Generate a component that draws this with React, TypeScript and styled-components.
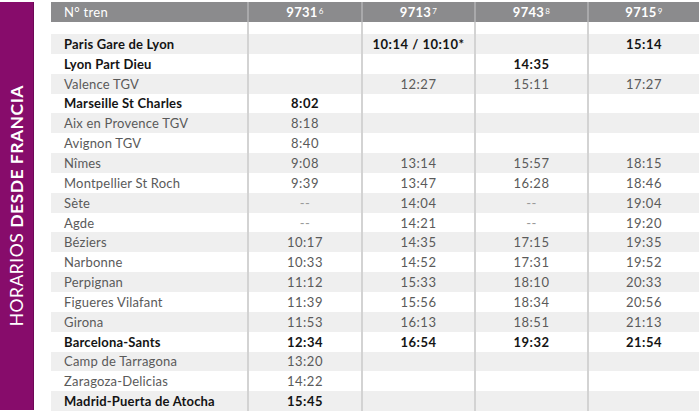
import React from 'react';
import styled, { createGlobalStyle } from 'styled-components';

const GlobalStyle = createGlobalStyle`
  html, body {
    margin: 0;
    padding: 0;
    background: #ffffff;
  }
  body {
    font-family: Lato, "Noto Sans", "Liberation Sans", sans-serif;
  }
`;

const Page = styled.div`
  display: flex;
  width: 700px;
  height: 415px;
  padding-top: 2px;
  box-sizing: border-box;
`;

const Banner = styled.div`
  width: 34px;
  height: 408px;
  background: #870c6b;
  border-right: 1px solid #6e0756;
  box-sizing: border-box;
  display: flex;
  align-items: center;
  justify-content: center;
  margin-right: 17px;
`;

const BannerText = styled.div`
  writing-mode: vertical-rl;
  transform: rotate(180deg);
  color: #ffffff;
  font-size: 17.5px;
  letter-spacing: 0.5px;
  white-space: nowrap;
  font-weight: 400;

  b {
    font-weight: 700;
  }
`;

const Table = styled.div`
  display: grid;
  grid-template-columns: 196px 114px 113px 113px 112px;
  align-content: start;
`;

const HeadCell = styled.div<{ $first?: boolean }>`
  height: 20px;
  background: #8b8b8d;
  color: #ffffff;
  font-size: 13px;
  font-weight: ${(p) => (p.$first ? 400 : 700)};
  letter-spacing: 0.3px;
  display: flex;
  align-items: center;
  justify-content: ${(p) => (p.$first ? 'flex-start' : 'center')};
  padding-left: ${(p) => (p.$first ? '13px' : '0')};
  border-left: ${(p) => (p.$first ? 'none' : '2px solid #a9a9ab')};
  box-sizing: border-box;

  sup {
    font-size: 8px;
    font-weight: 400;
    position: relative;
    top: -1px;
    margin-left: 1px;
  }
`;

const Cell = styled.div<{ $first?: boolean; $shade?: boolean; $bold?: boolean; $h: number; $dim?: boolean }>`
  height: ${(p) => p.$h}px;
  background: ${(p) => (p.$shade ? '#efefef' : '#ffffff')};
  color: ${(p) => (p.$dim ? '#9a9a9a' : p.$bold ? '#141414' : '#5a5a5a')};
  font-size: 13px;
  letter-spacing: ${(p) => (p.$first ? '0.2px' : '0.5px')};
  font-weight: ${(p) => (p.$bold ? 700 : 400)};
  display: flex;
  align-items: center;
  justify-content: ${(p) => (p.$first ? 'flex-start' : 'center')};
  padding-left: ${(p) => (p.$first ? '13px' : '0')};
  border-left: ${(p) => (p.$first ? 'none' : '2px solid #d3d3d3')};
  box-sizing: border-box;
  white-space: nowrap;
`;

type Row = { name: string; bold: boolean; times: string[] };

const trains = [
  { num: '9731', sup: '6' },
  { num: '9713', sup: '7' },
  { num: '9743', sup: '8' },
  { num: '9715', sup: '9' },
];

const rows: Row[] = [
  { name: 'Paris Gare de Lyon', bold: true, times: ['', '10:14 / 10:10*', '', '15:14'] },
  { name: 'Lyon Part Dieu', bold: true, times: ['', '', '14:35', ''] },
  { name: 'Valence TGV', bold: false, times: ['', '12:27', '15:11', '17:27'] },
  { name: 'Marseille St Charles', bold: true, times: ['8:02', '', '', ''] },
  { name: 'Aix en Provence TGV', bold: false, times: ['8:18', '', '', ''] },
  { name: 'Avignon TGV', bold: false, times: ['8:40', '', '', ''] },
  { name: 'Nîmes', bold: false, times: ['9:08', '13:14', '15:57', '18:15'] },
  { name: 'Montpellier St Roch', bold: false, times: ['9:39', '13:47', '16:28', '18:46'] },
  { name: 'Sète', bold: false, times: ['--', '14:04', '--', '19:04'] },
  { name: 'Agde', bold: false, times: ['--', '14:21', '--', '19:20'] },
  { name: 'Béziers', bold: false, times: ['10:17', '14:35', '17:15', '19:35'] },
  { name: 'Narbonne', bold: false, times: ['10:33', '14:52', '17:31', '19:52'] },
  { name: 'Perpignan', bold: false, times: ['11:12', '15:33', '18:10', '20:33'] },
  { name: 'Figueres Vilafant', bold: false, times: ['11:39', '15:56', '18:34', '20:56'] },
  { name: 'Girona', bold: false, times: ['11:53', '16:13', '18:51', '21:13'] },
  { name: 'Barcelona-Sants', bold: true, times: ['12:34', '16:54', '19:32', '21:54'] },
  { name: 'Camp de Tarragona', bold: false, times: ['13:20', '', '', ''] },
  { name: 'Zaragoza-Delicias', bold: false, times: ['14:22', '', '', ''] },
  { name: 'Madrid-Puerta de Atocha', bold: true, times: ['15:45', '', '', ''] },
];

const ROW_H = 19.85;

const App: React.FC = () => {
  return (
    <>
      <GlobalStyle />
      <Page>
        <Banner>
          <BannerText>
            HORARIOS <b>DESDE FRANCIA</b>
          </BannerText>
        </Banner>
        <Table>
          <HeadCell $first>N° tren</HeadCell>
          {trains.map((t) => (
            <HeadCell key={t.num}>
              {t.num}
              <sup>{t.sup}</sup>
            </HeadCell>
          ))}

          <Cell $first $h={12} />
          {trains.map((t) => (
            <Cell key={'gap' + t.num} $h={12} />
          ))}

          {rows.map((row, i) => {
            const shade = i % 2 === 0;
            return (
              <React.Fragment key={row.name}>
                <Cell $first $shade={shade} $bold={row.bold} $h={ROW_H}>
                  {row.name}
                </Cell>
                {row.times.map((time, j) => (
                  <Cell
                    key={j}
                    $shade={shade}
                    $bold={row.bold}
                    $dim={time === '--'}
                    $h={ROW_H}
                  >
                    {time}
                  </Cell>
                ))}
              </React.Fragment>
            );
          })}
        </Table>
      </Page>
    </>
  );
};

export default App;
